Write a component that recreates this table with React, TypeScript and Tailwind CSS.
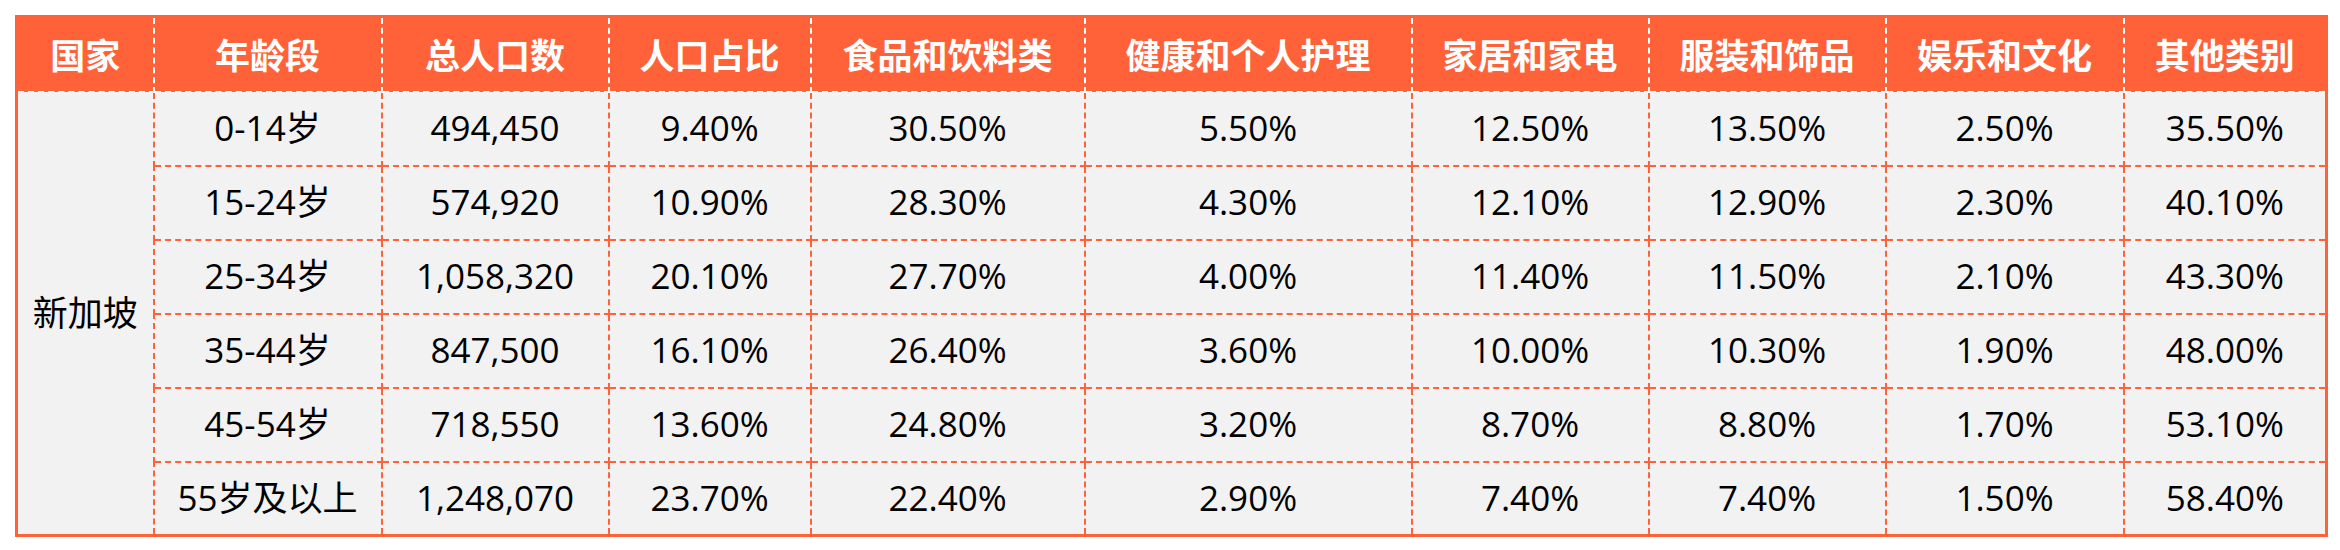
import React from 'react';

const headers = [
  '国家',
  '年龄段',
  '总人口数',
  '人口占比',
  '食品和饮料类',
  '健康和个人护理',
  '家居和家电',
  '服装和饰品',
  '娱乐和文化',
  '其他类别',
];

const colWidths = [137, 228, 227, 202, 274, 327, 237, 237, 238, 203];

const rows: string[][] = [
  ['0-14岁', '494,450', '9.40%', '30.50%', '5.50%', '12.50%', '13.50%', '2.50%', '35.50%'],
  ['15-24岁', '574,920', '10.90%', '28.30%', '4.30%', '12.10%', '12.90%', '2.30%', '40.10%'],
  ['25-34岁', '1,058,320', '20.10%', '27.70%', '4.00%', '11.40%', '11.50%', '2.10%', '43.30%'],
  ['35-44岁', '847,500', '16.10%', '26.40%', '3.60%', '10.00%', '10.30%', '1.90%', '48.00%'],
  ['45-54岁', '718,550', '13.60%', '24.80%', '3.20%', '8.70%', '8.80%', '1.70%', '53.10%'],
  ['55岁及以上', '1,248,070', '23.70%', '22.40%', '2.90%', '7.40%', '7.40%', '1.50%', '58.40%'],
];

export default function App() {
  return (
    <div className="min-h-[550px] bg-white p-[15px] font-['Open_Sans','Noto_Sans_CJK_SC',sans-serif]">
      <table className="w-[2310px] table-fixed border-collapse border-[3px] border-solid border-[#ff6239]">
        <colgroup>
          {colWidths.map((w, i) => (
            <col key={i} style={{ width: w }} />
          ))}
        </colgroup>
        <thead>
          <tr className="h-[75px] bg-[#ff6239]">
            {headers.map((h) => (
              <th
                key={h}
                className="border-2 border-dashed border-white p-0 text-center text-[35px] font-bold text-white first:border-l-[#ff6239] last:border-r-[#ff6239] font-['Noto_Sans_CJK_SC',sans-serif]"
              >
                {h}
              </th>
            ))}
          </tr>
        </thead>
        <tbody className="bg-[#f2f2f2] text-[35px] text-black">
          {rows.map((r, i) => (
            <tr key={i} className="h-[74px]">
              {i === 0 && (
                <td
                  rowSpan={6}
                  className="border-2 border-dashed border-[#ff6239] p-0 text-center align-middle"
                >
                  新加坡
                </td>
              )}
              {r.map((c, j) => (
                <td
                  key={j}
                  className="border-2 border-dashed border-[#ff6239] p-0 text-center align-middle"
                >
                  {c}
                </td>
              ))}
            </tr>
          ))}
        </tbody>
      </table>
    </div>
  );
}
